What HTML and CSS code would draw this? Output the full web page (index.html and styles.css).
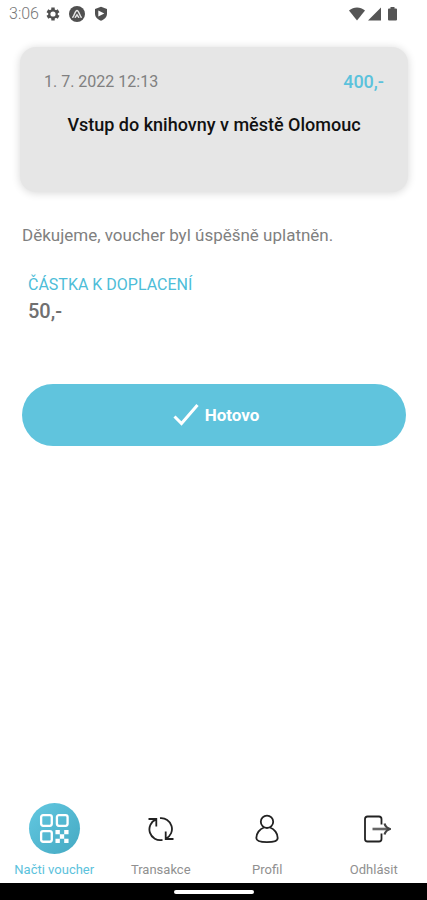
FILE: index.html
```html
<!DOCTYPE html>
<html lang="cs">
<head>
<meta charset="utf-8">
<meta name="viewport" content="width=device-width, initial-scale=1">
<title>Voucher</title>
<link rel="stylesheet" href="styles.css">
</head>
<body>
<header class="status">
  <span class="status-time">3:06</span>
  <svg class="status-gear" width="14" height="14" viewBox="0 0 14 14" aria-hidden="true"><g stroke="#505050" stroke-width="3.4"><path d="M7 0.5v13M1.4 3.7l11.2 6.6M1.4 10.3l11.2-6.6"/></g><circle cx="7" cy="7" r="4.8" fill="#505050"/><circle cx="7" cy="7" r="2.6" fill="#fff"/></svg>
  <svg class="status-app" width="16" height="16" viewBox="0 0 16 16" aria-hidden="true"><circle cx="8" cy="8" r="8" fill="#505050"/><path d="M3.8 11.2C5.4 9.500 6.200 4.500 8 4.500s2.600 5 4.200 6.700M6.300 11.300L8 8.800l1.700 2.500" fill="none" stroke="#e4e4e4" stroke-width="1.500" stroke-linecap="round"/></svg>
  <svg class="status-shield" width="14" height="16" viewBox="0 0 14 16" aria-hidden="true"><path d="M7 .8l6 2.300v4.500c0 3.400-2.500 6-6 7.200-3.500-1.200-6-3.800-6-7.200V3.100z" fill="#505050"/><path d="M4.300 4.500l6 2.900-6 3.200z" fill="#fff"/></svg>
  <span class="status-right">
    <svg width="16" height="14" viewBox="0 0 16 14" aria-hidden="true"><path d="M0 3.400C4.800-.5 11.200-.5 16 3.400L8 13.500z" fill="#555"/></svg>
    <svg width="13" height="14" viewBox="0 0 13 14" aria-hidden="true"><path d="M13 .5v13H0z" fill="#555"/></svg>
    <svg class="status-battery" width="9" height="14" viewBox="0 0 9 14" aria-hidden="true"><path d="M2.500 0h4v1.500H8q1 0 1 1v10q0 1-1 1H1q-1 0-1-1v-10q0-1 1-1h1.500z" fill="#555"/></svg>
  </span>
</header>
<main class="content">
  <section class="card">
    <div class="card-top">
      <time class="card-date" datetime="2022-07-01T12:13">1. 7. 2022 12:13</time>
      <span class="card-price">400,-</span>
    </div>
    <h1 class="card-title">Vstup do knihovny v městě Olomouc</h1>
  </section>
  <p class="message">Děkujeme, voucher byl úspěšně uplatněn.</p>
  <dl class="due">
    <dt class="due-label">ČÁSTKA K DOPLACENÍ</dt>
    <dd class="due-amount">50,-</dd>
  </dl>
  <button class="done" type="button">
    <svg width="26" height="24" viewBox="0 0 26 24" aria-hidden="true"><path d="M1.500 13.500L8.500 20.500 24.500 2" fill="none" stroke="#fff" stroke-width="3"/></svg>
    <span>Hotovo</span>
  </button>
</main>
<nav class="tabs">
  <a class="tab tab-active" href="#voucher">
    <span class="tab-icon tab-circle"><svg width="31" height="31" viewBox="0 0 32 32" aria-hidden="true"><g fill="none" stroke="#fff" stroke-width="2.400"><rect x="2.200" y="2.200" width="11" height="11" rx="2"/><rect x="18.500" y="2.200" width="11" height="11" rx="2"/><rect x="2.200" y="18.700" width="11" height="11" rx="2"/></g><path d="M17 17.500h4.500v4.500H17zM26 17.500h4.500v4.500H26zM21.500 22H26v4.500h-4.500zM17 26.500h4.500V31H17zM26 26.500h4.500V31H26z" fill="#fff"/></svg></span>
    <span>Načti voucher</span>
  </a>
  <a class="tab" href="#transakce">
    <span class="tab-icon"><svg width="26" height="26" viewBox="0 0 26 26" fill="none" stroke="#222" stroke-width="1.800" aria-hidden="true"><path d="M14.500 23.900A10.800 10.800 0 0 1 8 3.400M.500 3H8.300V10.500M12 2.200A10.800 10.800 0 0 1 18 22.600M25.500 23H17.700V15.500"/></svg></span>
    <span>Transakce</span>
  </a>
  <a class="tab" href="#profil">
    <span class="tab-icon"><svg width="24" height="30" viewBox="0 0 24 30" fill="none" stroke="#222" stroke-width="1.800" aria-hidden="true"><circle cx="12" cy="7.800" r="6.200"/><path d="M9 13.500C4.500 15 1.300 19.500 1.300 24c0 2.800 3.200 4.200 10.700 4.200s10.700-1.400 10.700-4.200c0-4.500-3.200-9-7.700-10.500"/></svg></span>
    <span>Profil</span>
  </a>
  <a class="tab" href="#odhlasit">
    <span class="tab-icon"><svg class="logout" width="28" height="28" viewBox="0 0 28 28" fill="none" stroke="#222" stroke-width="1.800" aria-hidden="true"><path d="M18.500 9.500V4q0-2.500-2.500-2.500H4.500Q2 1.500 2 4v20q0 2.500 2.500 2.500H16q2.500 0 2.500-2.500v-5.500"/><path d="M9.500 14H26" stroke="#666" stroke-width="2.600"/><path d="M21.500 8.500Q22.500 12.500 27 14 22.500 15.500 21.500 19.500" stroke="#444" stroke-width="2.200"/></svg></span>
    <span>Odhlásit</span>
  </a>
</nav>
<footer class="system"><span class="system-handle"></span></footer>
</body>
</html>
```
FILE: styles.css
```css
* {
  box-sizing: border-box;
}

body {
  margin: 0;
  min-height: 100vh;
  display: flex;
  flex-direction: column;
  background: #fff;
  color: #808080;
  font-family: Roboto, "Liberation Sans", sans-serif;
  font-size: 16px;
  line-height: 20px;
}

svg {
  display: block;
  flex: none;
}

.status {
  display: flex;
  align-items: center;
  height: 28px;
  padding: 0 30px 0 9px;
}

.status-time {
  margin-right: 7px;
  color: #777;
  font-weight: 300;
}

.status-app {
  margin: 0 9px;
}

.status-right {
  display: flex;
  gap: 3px;
  margin-left: auto;
}

.status-battery {
  margin-left: 4px;
}

.content {
  flex: 1;
  padding: 19px 19px 20px 20px;
}

.card {
  min-height: 145px;
  padding: 25px 24px;
  border-radius: 16px;
  background: #e6e6e6;
  box-shadow: 0 1px 8px rgba(0, 0, 0, 0.16);
}

.card-top {
  display: flex;
  justify-content: space-between;
}

.card-price {
  color: #5bc2dc;
  font-size: 18px;
  font-weight: 500;
}

.card-title {
  margin: 23px 0 0;
  color: #111;
  font-size: 18px;
  font-weight: 500;
  text-align: center;
}

.message {
  margin: 31px 2px 0;
  font-size: 17px;
  line-height: 24px;
}

.due {
  margin: 28px 8px 0;
}

.due-label {
  color: #4dbdd8;
}

.due-amount {
  margin: 4px 0 0;
  color: #707070;
  font-size: 20px;
  font-weight: 500;
  line-height: 24px;
}

.done {
  display: flex;
  align-items: center;
  justify-content: center;
  gap: 6px;
  width: calc(100% - 4px);
  height: 62px;
  margin: 61px 2px 0;
  padding: 0 0 0 4px;
  border: 0;
  border-radius: 31px;
  background: #60c4dd;
  color: #fff;
  font: 700 17px/20px Roboto, "Liberation Sans", sans-serif;
}

.tabs {
  display: grid;
  grid-template-columns: repeat(4, 1fr);
  padding: 0 0 5px 1px;
}

.tab {
  display: flex;
  flex-direction: column;
  align-items: center;
  gap: 8px;
  color: #909090;
  font-size: 13px;
  line-height: 16px;
  text-decoration: none;
  white-space: nowrap;
}

.tab-active {
  color: #5bc2dc;
}

.tab-icon {
  display: flex;
  align-items: center;
  justify-content: center;
  width: 51px;
  height: 51px;
}

.tab-circle {
  border-radius: 50%;
  background: linear-gradient(135deg, #62c8e1, #45a9c2);
}

.logout {
  margin-left: 6px;
}

.system {
  display: flex;
  align-items: center;
  justify-content: center;
  height: 17px;
  background: #000;
}

.system-handle {
  width: 80px;
  height: 4px;
  border-radius: 2px;
  background: #fff;
}
```
